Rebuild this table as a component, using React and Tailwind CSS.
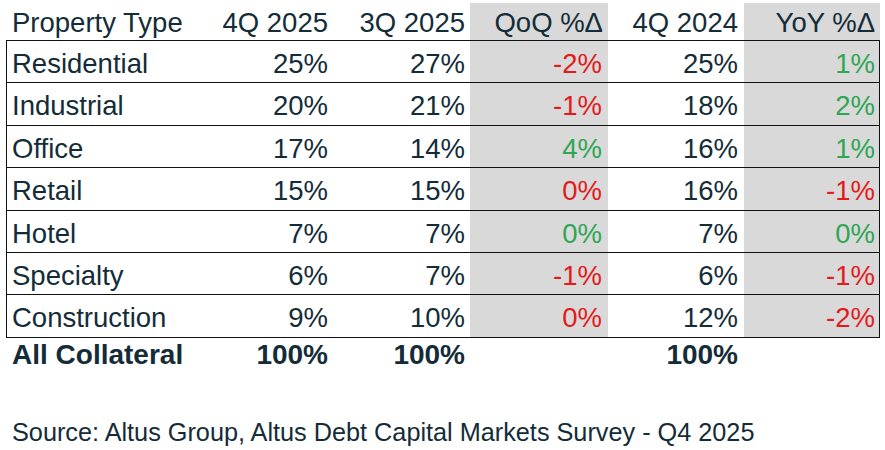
const rows = [
    { type: 'Residential', q4: '25%', q3: '27%', qoq: '-2%', prev: '25%', yoy: '1%' },
    { type: 'Industrial', q4: '20%', q3: '21%', qoq: '-1%', prev: '18%', yoy: '2%' },
    { type: 'Office', q4: '17%', q3: '14%', qoq: '4%', prev: '16%', yoy: '1%' },
    { type: 'Retail', q4: '15%', q3: '15%', qoq: '0%', prev: '16%', yoy: '-1%' },
    { type: 'Hotel', q4: '7%', q3: '7%', qoq: '0%', prev: '7%', yoy: '0%' },
    { type: 'Specialty', q4: '6%', q3: '7%', qoq: '-1%', prev: '6%', yoy: '-1%' },
    { type: 'Construction', q4: '9%', q3: '10%', qoq: '0%', prev: '12%', yoy: '-2%' }
];

const changeColor = {
    Residential: { qoq: 'text-[#e3191c]', yoy: 'text-[#2ea653]' },
    Industrial: { qoq: 'text-[#e3191c]', yoy: 'text-[#2ea653]' },
    Office: { qoq: 'text-[#2ea653]', yoy: 'text-[#2ea653]' },
    Retail: { qoq: 'text-[#e3191c]', yoy: 'text-[#e3191c]' },
    Hotel: { qoq: 'text-[#2ea653]', yoy: 'text-[#2ea653]' },
    Specialty: { qoq: 'text-[#e3191c]', yoy: 'text-[#e3191c]' },
    Construction: { qoq: 'text-[#e3191c]', yoy: 'text-[#e3191c]' }
};

export default function App() {
    return (
        <div className="w-[885px] h-[450px] bg-white text-[#132c38] text-[27.5px] leading-[27px] pt-[3px] pl-[6px] overflow-hidden" style={{ fontFamily: '"Liberation Sans", Arial, sans-serif' }}>
            <div className="grid grid-cols-[190px_137px_137px_138px_136px_136px] h-[37px]">
                <div className="pl-[6px] pt-[6px]">Property Type</div>
                <div className="text-right pr-[5px] pt-[6px]">4Q 2025</div>
                <div className="text-right pr-[5px] pt-[6px]">3Q 2025</div>
                <div className="text-right pr-[5px] pt-[6px] bg-[#d9d9d9]">QoQ %Δ</div>
                <div className="text-right pr-[6px] pt-[6px]">4Q 2024</div>
                <div className="text-right pr-[5px] pt-[6px] bg-[#d9d9d9]">YoY %Δ</div>
            </div>

            <div className="w-[874px] border border-[#111]">
                {rows.map((r, i) => (
                    <div
                        key={r.type}
                        className={`grid grid-cols-[189px_137px_137px_138px_136px_135px] ${i < rows.length - 1 ? 'h-[42.4px] border-b border-[#111]' : 'h-[41.4px]'}`}
                    >
                        <div className="pl-[5px] pt-[9px]">{r.type}</div>
                        <div className="text-right pr-[5px] pt-[9px]">{r.q4}</div>
                        <div className="text-right pr-[5px] pt-[9px]">{r.q3}</div>
                        <div className={`text-right pr-[6px] pt-[9px] bg-[#d9d9d9] ${changeColor[r.type].qoq}`}>{r.qoq}</div>
                        <div className="text-right pr-[6px] pt-[9px]">{r.prev}</div>
                        <div className={`text-right pr-[4px] pt-[9px] bg-[#d9d9d9] ${changeColor[r.type].yoy}`}>{r.yoy}</div>
                    </div>
                ))}
            </div>

            <div className="grid grid-cols-[190px_137px_137px_138px_136px_136px] h-[45px] font-bold text-[28px] pt-[3px]">
                <div className="pl-[6px]">All Collateral</div>
                <div className="text-right pr-[5px]">100%</div>
                <div className="text-right pr-[5px]">100%</div>
                <div></div>
                <div className="text-right pr-[6px]">100%</div>
                <div></div>
            </div>

            <div className="mt-[37px] pl-[6px] text-[25.25px] leading-[25px]">
                Source: Altus Group, Altus Debt Capital Markets Survey - Q4 2025
            </div>
        </div>
    );
}
